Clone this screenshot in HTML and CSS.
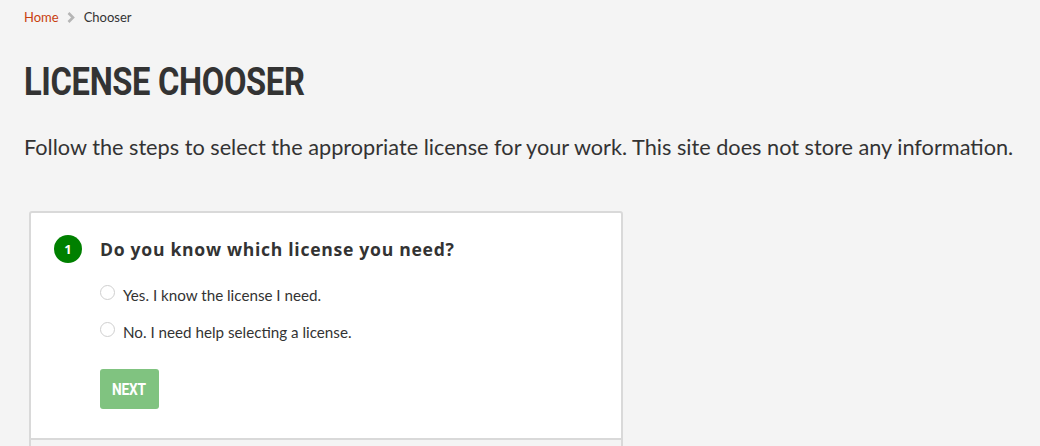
FILE: index.html
```html
<!DOCTYPE html>
<html lang="en">
<head>
<meta charset="utf-8">
<title>License Chooser</title>
<link rel="stylesheet" href="styles.css">
</head>
<body>
<div class="page">
  <nav class="breadcrumb">
    <a class="crumb-link" href="#">Home</a>
    <svg class="crumb-sep" width="8" height="11" viewBox="0 0 8 11"><path d="M1.5 1 L6 5.5 L1.5 10" fill="none" stroke="#b5b5b5" stroke-width="2.6"/></svg>
    <span class="crumb-current">Chooser</span>
  </nav>
  <h1 class="title"><span class="condensed">LICENSE CHOOSER</span></h1>
  <p class="intro">Follow the steps to select the appropriate license for your work. This site does not store any information.</p>
  <section class="card">
    <div class="step">
      <div class="step-head">
        <span class="step-num">1</span>
        <h2 class="step-title">Do you know which license you need?</h2>
      </div>
      <div class="step-body">
        <label class="option"><span class="radio"></span>Yes. I know the license I need.</label>
        <label class="option"><span class="radio"></span>No. I need help selecting a license.</label>
        <button class="next" type="button"><span class="condensed">NEXT</span></button>
      </div>
    </div>
    <div class="step-next"></div>
  </section>
</div>
</body>
</html>
```

FILE: styles.css
```css
html, body {
  margin: 0;
  padding: 0;
  background: #f4f4f4;
}
body {
  font-family: "Lato", "Open Sans", sans-serif;
  color: #333;
}
.page {
  padding: 0 24px;
}
.breadcrumb {
  display: flex;
  align-items: center;
  gap: 8px;
  height: 34px;
  font-size: 13px;
  font-family: "Lato", sans-serif;
}
.crumb-link {
  color: #c9400f;
  text-decoration: none;
}
.crumb-current {
  color: #333;
  margin-left: 1px;
}
.condensed {
  display: inline-block;
  transform: scaleX(0.86);
  transform-origin: left center;
}
.title {
  margin: 30px 0 0;
  font-family: "Roboto", sans-serif;
  font-weight: 700;
  font-size: 38px;
  line-height: 36px;
  letter-spacing: -0.4px;
  color: #333;
  white-space: nowrap;
}
.intro {
  margin: 34px 0 0;
  font-size: 21.7px;
  line-height: 26px;
  color: #333;
  white-space: nowrap;
}
.card {
  margin: 51px 0 0 5px;
  width: 590px;
  border: 2px solid #d9d9d9;
  border-radius: 3px;
  background: #fff;
}
.step {
  padding: 22px 23px 29px;
  border-bottom: 2px solid #d9d9d9;
}
.step-head {
  display: flex;
  align-items: center;
  gap: 18px;
}
.step-num {
  width: 28px;
  height: 28px;
  border-radius: 50%;
  background: #008000;
  color: #fff;
  font-family: "Open Sans", sans-serif;
  font-weight: 700;
  font-size: 13px;
  display: flex;
  align-items: center;
  justify-content: center;
}
.step-title {
  margin: 0;
  font-family: "Open Sans", sans-serif;
  font-weight: 700;
  font-size: 17.6px;
  letter-spacing: 0.7px;
  color: #333;
}
.step-body {
  padding-left: 46px;
  display: flex;
  flex-direction: column;
  align-items: flex-start;
}
.option {
  display: flex;
  align-items: center;
  gap: 8px;
  font-size: 15.2px;
  line-height: 20px;
  color: #333;
  margin-top: 22px;
}
.option + .option {
  margin-top: 17px;
}
.radio {
  width: 13px;
  height: 13px;
  border: 1px solid #cfcfcf;
  border-radius: 50%;
  background: #fff;
  margin-top: -6px;
}
.next {
  margin-top: 27px;
  width: 59px;
  height: 40px;
  border: none;
  border-radius: 3px;
  background: #80c380;
  color: #fff;
  font-family: "Roboto", sans-serif;
  font-weight: 700;
  font-size: 16px;
  letter-spacing: -0.3px;
  padding: 0 0 0 12px;
  text-align: left;
}
.step-next {
  height: 60px;
  background: #f4f4f4;
}
```
